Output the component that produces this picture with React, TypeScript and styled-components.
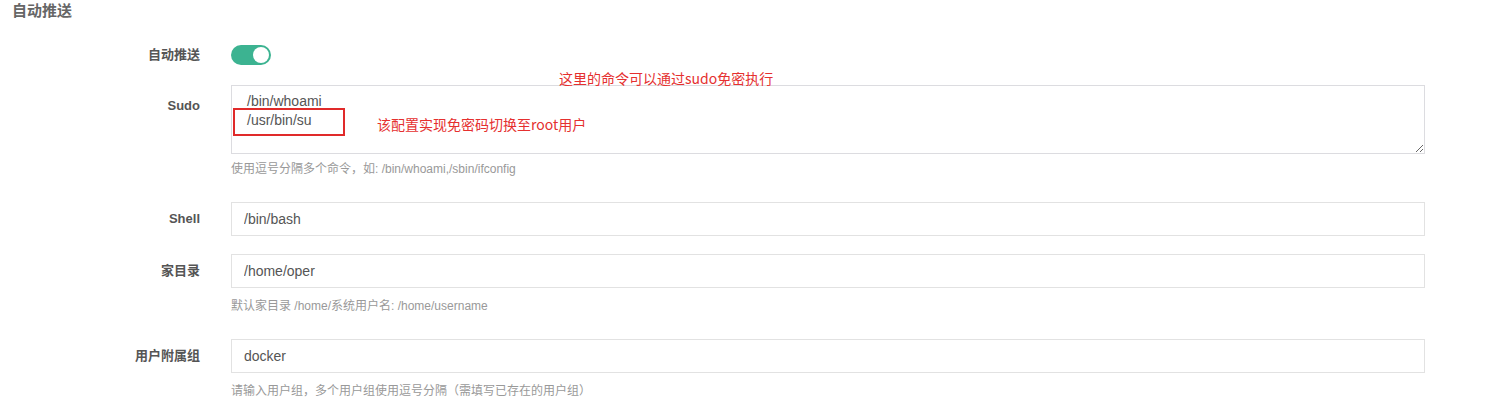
import React from "react";
import styled, { createGlobalStyle } from "styled-components";

const GlobalStyle = createGlobalStyle`
  html, body {
    margin: 0;
    padding: 0;
    background: #ffffff;
  }
  body {
    font-family: "Liberation Sans", "Noto Sans CJK SC", Arial, sans-serif;
    color: #555;
  }
  * { box-sizing: border-box; }
`;

const Page = styled.div`
  position: relative;
  width: 1499px;
  height: 415px;
  overflow: hidden;
`;

const Title = styled.h3`
  margin: 0;
  padding-left: 12px;
  height: 20px;
  line-height: 21px;
  font-size: 15px;
  font-weight: bold;
  color: #666;
`;

const Form = styled.div`
  display: flex;
  flex-direction: column;
  padding-right: 74px;
`;

const FormGroup = styled.div<{ $mt?: number; $mb?: number }>`
  display: grid;
  grid-template-columns: 200px 1fr;
  column-gap: 31px;
  margin-top: ${(p) => p.$mt ?? 0}px;
  margin-bottom: ${(p) => p.$mb ?? 18}px;
`;

const Label = styled.label<{ $lh: number; $pt?: number }>`
  text-align: right;
  font-size: 13px;
  font-weight: bold;
  color: #555;
  line-height: ${(p) => p.$lh}px;
  padding-top: ${(p) => p.$pt ?? 0}px;
`;

const Control = styled.div`
  display: flex;
  flex-direction: column;
`;

const Switch = styled.div`
  width: 40px;
  height: 20px;
  border-radius: 10px;
  background: #3cb391;
  display: flex;
  align-items: center;
  justify-content: flex-end;
  padding: 0 2px;
`;

const Knob = styled.span`
  width: 16px;
  height: 16px;
  border-radius: 50%;
  background: #ffffff;
`;

const TextInput = styled.input`
  display: block;
  width: 100%;
  height: 34px;
  border: 1px solid #e2e2e2;
  border-radius: 0;
  padding: 0 12px;
  font-family: "Liberation Sans", "Noto Sans CJK SC", Arial, sans-serif;
  font-size: 14px;
  color: #555;
  background: #fff;
  outline: none;
`;

const TextArea = styled.textarea`
  display: block;
  width: 100%;
  height: 69px;
  border: 1px solid #dcdce0;
  border-radius: 0;
  padding: 6px 15px 4px;
  font-family: "Liberation Sans", "Noto Sans CJK SC", Arial, sans-serif;
  font-size: 14px;
  line-height: 19px;
  color: #555;
  background: #fff;
  outline: none;
  resize: vertical;
`;

const Help = styled.div<{ $mt: number }>`
  margin-top: ${(p) => p.$mt}px;
  margin-bottom: 6px;
  font-size: 12px;
  line-height: 18px;
  color: #999;
`;

const Note = styled.div<{ $left: number; $top: number }>`
  position: absolute;
  left: ${(p) => p.$left}px;
  top: ${(p) => p.$top}px;
  font-family: "Noto Sans CJK SC", "Liberation Sans", sans-serif;
  font-size: 14px;
  line-height: 20px;
  color: #e5302f;
  white-space: nowrap;
`;

const MarkBox = styled.div`
  position: absolute;
  left: 233px;
  top: 108px;
  width: 112px;
  height: 28px;
  border: 2px solid #e02a2a;
`;

export default function App() {
  return (
    <>
      <GlobalStyle />
      <Page>
        <Title>自动推送</Title>
        <Form>
          <FormGroup $mt={25} $mb={20}>
            <Label $lh={20}>自动推送</Label>
            <Control>
              <Switch>
                <Knob />
              </Switch>
            </Control>
          </FormGroup>

          <FormGroup>
            <Label $lh={20} $pt={11}>Sudo</Label>
            <Control>
              <TextArea defaultValue={"/bin/whoami\n/usr/bin/su"} />
              <Help $mt={6}>使用逗号分隔多个命令，如: /bin/whoami,/sbin/ifconfig</Help>
            </Control>
          </FormGroup>

          <FormGroup>
            <Label $lh={34}>Shell</Label>
            <Control>
              <TextInput defaultValue="/bin/bash" />
            </Control>
          </FormGroup>

          <FormGroup>
            <Label $lh={34}>家目录</Label>
            <Control>
              <TextInput defaultValue="/home/oper" />
              <Help $mt={9}>默认家目录 /home/系统用户名: /home/username</Help>
            </Control>
          </FormGroup>

          <FormGroup>
            <Label $lh={34}>用户附属组</Label>
            <Control>
              <TextInput defaultValue="docker" />
              <Help $mt={9}>请输入用户组，多个用户组使用逗号分隔（需填写已存在的用户组）</Help>
            </Control>
          </FormGroup>
        </Form>

        <Note $left={559} $top={68}>这里的命令可以通过sudo免密执行</Note>
        <MarkBox />
        <Note $left={377} $top={114}>该配置实现免密码切换至root用户</Note>
      </Page>
    </>
  );
}
